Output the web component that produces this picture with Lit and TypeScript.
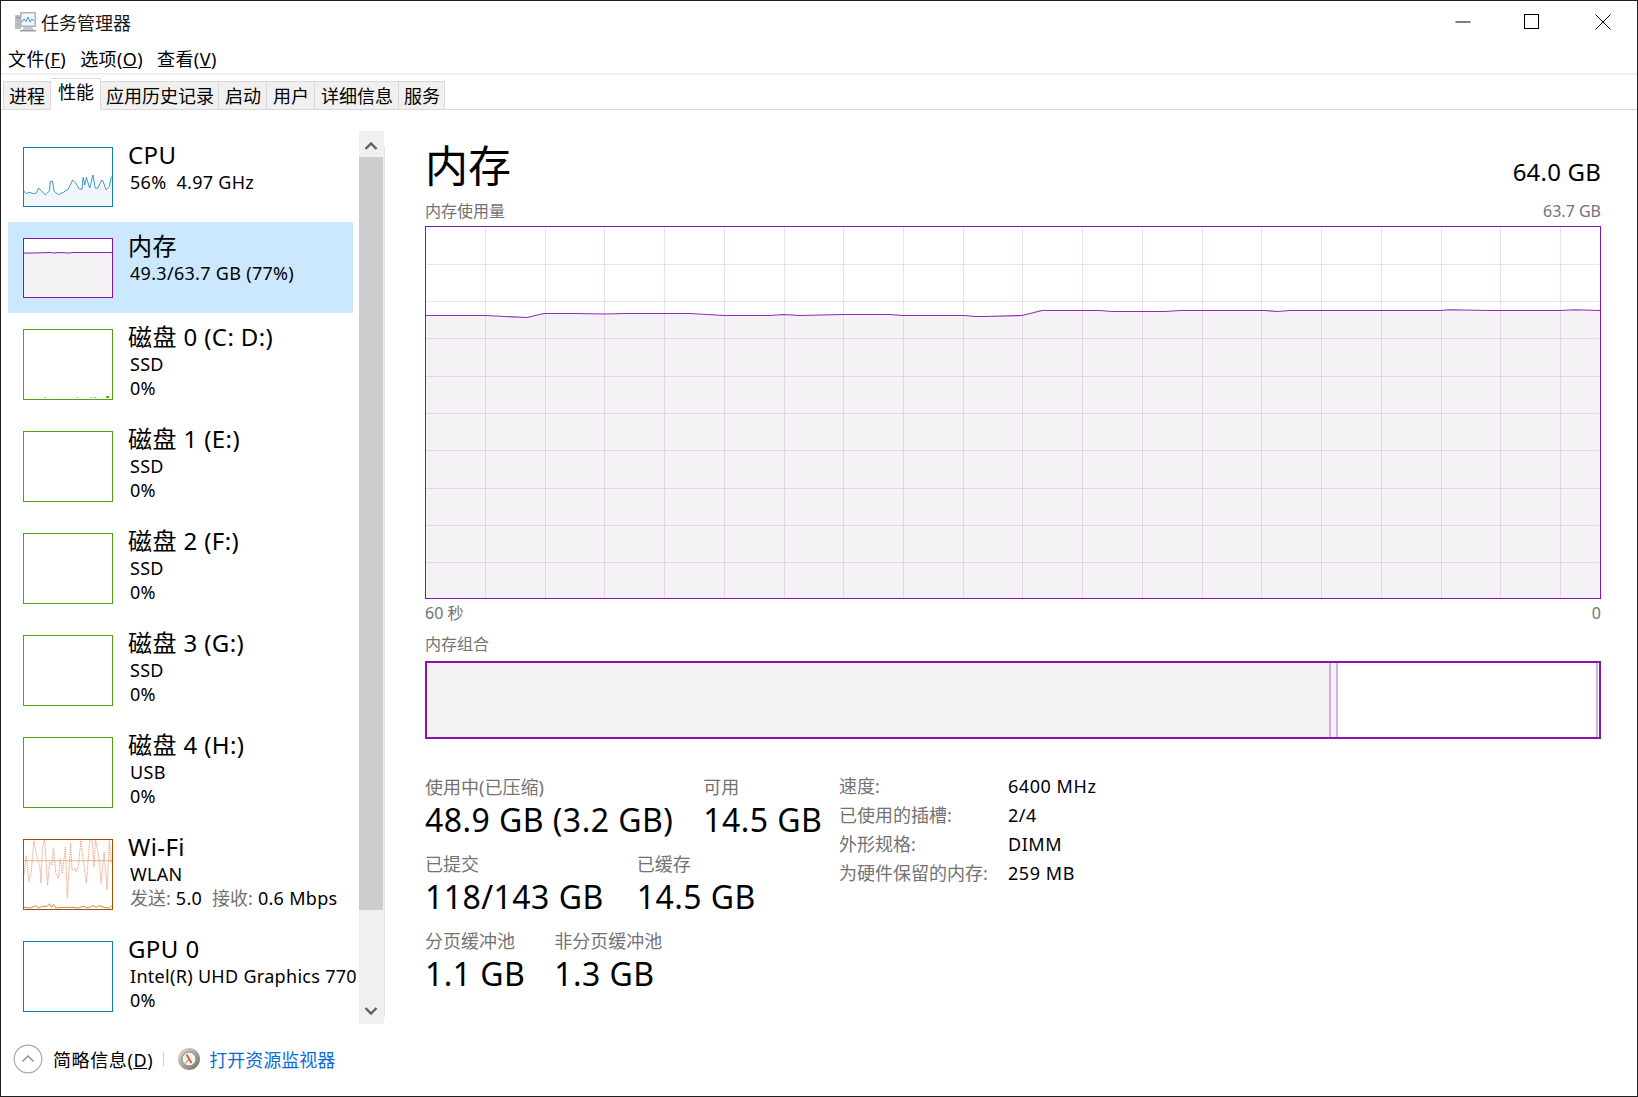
import { LitElement, html, css, svg } from "lit";
import { customElement } from "lit/decorators.js";

const CPU = "70,185 78,192 85,188 100,192 108,190 114,175 122,182 135,196 147,184 150,155 157,154 162,185 175,195 190,188 205,178 218,150 228,160 238,178 247,178 250,142 255,165 260,142 270,175 280,135 287,175 295,175 305,152 310,152 320,180 330,170 336,140";
const WIFI_A = "40,130 47,75 55,155 62,125 70,30 78,75 88,105 92,160 96,50 103,28 112,165 118,95 125,105 130,50 137,130 145,145 150,85 157,130 166,50 172,205 182,38 186,120 195,115 200,125 207,100 213,30 222,100 230,160 240,30 248,28 253,110 258,28 268,80 275,160 284,65 293,180 300,28 306,100";
const WIFI_B = "40,233 60,235 75,228 85,235 95,230 110,230 118,222 124,233 130,224 136,235 160,233 185,233 205,235 220,230 235,235 250,228 260,233 268,228 285,233 300,235 308,228";
const MEM_LINE = "426,315.5 485,315.5 527,317.5 544,313.5 575,313.5 604,314 625,313.5 690,313.5 724,315.5 770,315.5 783,314.5 800,315.5 843,314.5 890,314.5 903,315.5 965,315.5 975,316.5 985,316.5 1022,315.5 1042,310.5 1100,310.5 1112,311.5 1165,311.5 1180,310.5 1265,310.5 1277,311.5 1290,310.5 1440,310.5 1450,309.8 1490,310.5 1560,310.5 1575,309.8 1600,310.5";
const GRID_X = Array.from({ length: 19 }, (_, i) => Math.round(485 + i * 59.72) + 0.5);
const GRID_Y = Array.from({ length: 9 }, (_, i) => Math.round(226.5 + (i + 1) * 37.3) + 0.5);

type Kind = "cpu" | "mem" | "disk0" | "disk" | "wifi" | "gpu";
interface Item {
  title: string;
  lines: unknown[];
  kind: Kind;
  tall: boolean;
  selected?: boolean;
}

const ITEMS: Item[] = [
  { title: "CPU", lines: ["56%  4.97 GHz"], kind: "cpu", tall: false },
  { title: "内存", lines: ["49.3/63.7 GB (77%)"], kind: "mem", tall: false, selected: true },
  { title: "磁盘 0 (C: D:)", lines: ["SSD", "0%"], kind: "disk0", tall: true },
  { title: "磁盘 1 (E:)", lines: ["SSD", "0%"], kind: "disk", tall: true },
  { title: "磁盘 2 (F:)", lines: ["SSD", "0%"], kind: "disk", tall: true },
  { title: "磁盘 3 (G:)", lines: ["SSD", "0%"], kind: "disk", tall: true },
  { title: "磁盘 4 (H:)", lines: ["USB", "0%"], kind: "disk", tall: true },
  {
    title: "Wi-Fi",
    lines: ["WLAN", html`<span class="grey">发送:</span> 5.0&nbsp; <span class="grey">接收:</span> 0.6 Mbps`],
    kind: "wifi",
    tall: true,
  },
  { title: "GPU 0", lines: ["Intel(R) UHD Graphics 770", "0%"], kind: "gpu", tall: true },
];

const thumb = (kind: Kind) => {
  if (kind === "cpu") {
    return html`<svg viewBox="70 52 268 178" preserveAspectRatio="none">
      <polygon points="70,230 ${CPU} 338,230" fill="#f1f6fa"></polygon>
      <polyline points=${CPU} fill="none" stroke="#117dbb" stroke-width="2.4"></polyline>
    </svg>`;
  }
  if (kind === "mem") {
    return html`<svg viewBox="0 0 90 60" preserveAspectRatio="none">
      <polygon points="0,14.5 9,14.5 27,14 30,14.5 36,14 47,14.5 49,14 90,14 90,60 0,60" fill="#f4f2f4"></polygon>
      <polyline points="0,14.5 9,14.5 27,14 30,14.5 36,14 47,14.5 49,14 90,14" fill="none" stroke="#8b12ae" stroke-width="1"></polyline>
    </svg>`;
  }
  if (kind === "disk0") {
    return html`<svg viewBox="0 0 90 71" preserveAspectRatio="none">
      <path d="M21 69h1v1h-1zM54 69h1v1h-1zM68 69h1v1h-1zM71 69h1v1h-1zM73 69h1v1h-1zM84 68h3v2h-3z" fill="#4da60c"></path>
    </svg>`;
  }
  if (kind === "wifi") {
    return html`<svg viewBox="40 28 268 210" preserveAspectRatio="none">
      <polyline points=${WIFI_A} fill="none" stroke="#fbe7de" stroke-width="3"></polyline>
      <polyline points=${WIFI_A} fill="none" stroke="#ea8f69" stroke-width="2.6" stroke-dasharray="3 4"></polyline>
      <line x1="40" y1="91" x2="308" y2="91" stroke="#d7a272" stroke-width="2.4"></line>
      <polyline points=${WIFI_B} fill="none" stroke="#b7662a" stroke-width="2.4"></polyline>
    </svg>`;
  }
  return null;
};

const graph = () => svg`
  <polygon points="426,598 ${MEM_LINE} 1600,598" fill="#f4f2f4"></polygon>
  ${GRID_X.map((x) => svg`<line x1=${x} y1="227" x2=${x} y2="598" stroke="#781e8c" stroke-opacity=".13"></line>`)}
  ${GRID_Y.map((y) => svg`<line x1="426" y1=${y} x2="1599" y2=${y} stroke="#781e8c" stroke-opacity=".13"></line>`)}
  <polyline points=${MEM_LINE} fill="none" stroke="#8b12ae" stroke-opacity=".9" stroke-width="1.1"></polyline>
`;

@customElement("app-root")
export class AppRoot extends LitElement {
  static styles = css`
    :host {
      display: block;
      width: 1638px;
      height: 1097px;
      font-family: "Noto Sans", "Noto Sans CJK SC", sans-serif;
      color: #000;
    }
    * { box-sizing: border-box; }
    .win {
      width: 1638px;
      height: 1097px;
      border: 1px solid #1f1f1f;
      background: #fff;
      display: flex;
      flex-direction: column;
      overflow: hidden;
    }
    .title {
      height: 43px;
      flex: none;
      display: flex;
      align-items: center;
      padding: 0 0 2px 13px;
      font-size: 18px;
      color: #1a1a1a;
    }
    .title svg.app { width: 23px; height: 21px; margin-right: 4px; }
    .controls { margin-left: auto; display: flex; align-items: center; height: 100%; }
    .controls svg { display: block; width: 16px; height: 16px; }
    .controls .c1 { margin-right: 53px; }
    .controls .c2 { margin-right: 55px; }
    .controls .c3 { margin-right: 26px; }
    .menu {
      height: 29px;
      flex: none;
      display: flex;
      gap: 14px;
      padding-left: 7px;
      font-size: 18px;
      line-height: 30px;
      letter-spacing: 0.4px;
      white-space: nowrap;
    }
    .rule { height: 2px; flex: none; background: #f0f0f0; }
    .tabs {
      height: 35px;
      flex: none;
      display: flex;
      align-items: flex-end;
      padding-left: 2px;
      border-bottom: 1px solid #d9d9d9;
      font-size: 18px;
    }
    .tab {
      height: 29px;
      margin-bottom: -1px;
      padding: 0 5px;
      line-height: 28px;
      background: #f0f0f0;
      border-top: 1px solid #d9d9d9;
      border-right: 1px solid #d9d9d9;
      border-bottom: 1px solid #d9d9d9;
      white-space: nowrap;
    }
    .tab:first-child { border-left: 1px solid #d9d9d9; }
    .tab.narrow { padding: 0 4px 0 5px; }
    .tab.wide { padding: 0 5px 0 6px; }
    .tab.active {
      height: 32px;
      margin-bottom: -1px;
      background: #fff;
      border-bottom-color: #fff;
      padding: 0 6px 0 7px;
      line-height: 26px;
    }
    .body { flex: 1; min-height: 0; display: flex; padding-top: 21px; }
    .side { display: flex; flex: none; height: 893px; }
    .list { width: 358px; flex: none; padding-left: 7px; overflow: hidden; }
    .item {
      width: 345px;
      display: flex;
      height: 102px;
      padding: 16px 0 0 15px;
      white-space: nowrap;
    }
    .item.short { height: 91px; }
    .item.sel { background: #cce8ff; }
    .thumb {
      width: 90px;
      height: 71px;
      flex: none;
      border: 1px solid;
      background: #fff;
    }
    .item.short .thumb { height: 60px; }
    .thumb svg { display: block; width: 100%; height: 100%; }
    .t-cpu, .t-gpu { border-color: #117dbb; }
    .t-mem { border-color: #8b12ae; }
    .t-disk0, .t-disk { border-color: #4da60c; }
    .t-wifi { border-color: #a74f01; }
    .info { margin: -7px 0 0 15px; }
    .name { font-size: 24px; line-height: 30px; letter-spacing: 0.4px; }
    .sub { font-size: 18px; line-height: 24px; padding-left: 2px; letter-spacing: 0.3px; white-space: pre; }
    .grey { color: #737373; letter-spacing: 0; }
    .sb {
      width: 25px;
      flex: none;
      background: #f0f0f0;
      display: flex;
      flex-direction: column;
    }
    .sb .btn { height: 26px; flex: none; display: flex; align-items: center; justify-content: center; }
    .sb .btn.up { padding-top: 4px; }
    .sb .btn svg { width: 14px; height: 10px; display: block; margin-right: 2px; }
    .sb .bar { height: 753px; width: 24px; background: #cdcdcd; flex: none; }
    .sb .rest { flex: 1; }
    .edge { width: 1px; flex: none; background: #e3e3e3; margin: 15px 0 7px; }
    .main { flex: none; width: 1176px; margin-left: 40px; }
    .head { height: 70px; display: flex; justify-content: space-between; }
    .head h1 { margin: 0; font-size: 43px; font-weight: 400; line-height: 70px; }
    .head .total { margin-top: 25px; font-size: 24px; line-height: 32px; letter-spacing: 0.2px; }
    .cap {
      display: flex;
      justify-content: space-between;
      font-size: 16px;
      line-height: 21px;
      color: #737373;
    }
    .cap.top { margin-bottom: 4px; }
    .cap.time { height: 28px; line-height: 28px; }
    .cap.comp { margin: 6px 0 6px; line-height: 22px; }
    .graph { height: 373px; border: 1px solid #8b12ae; background: #fff; }
    .graph svg { display: block; width: 100%; height: 100%; }
    .combo {
      height: 78px;
      border: 2px solid #8b12ae;
      display: flex;
      background: #fff;
    }
    .combo .use { width: 902px; background: #f4f2f4; }
    .combo .mark { width: 2px; background: #d0b0dc; }
    .combo .mod { width: 5px; background: #f4f2f4; }
    .combo .free { flex: 1; }
    .combo .end { width: 1px; }
    .stats { display: flex; margin-top: 36px; }
    .left { width: 414px; flex: none; }
    .row { display: flex; height: 77px; white-space: nowrap; }
    .r1 { gap: 30px; }
    .r2 { gap: 33px; }
    .r3 { gap: 29px; }
    .lbl { font-size: 18px; line-height: 24px; color: #737373; }
    .val { font-size: 32px; line-height: 41px; letter-spacing: 0.45px; }
    .spec {
      display: grid;
      grid-template-columns: 169px auto;
      grid-auto-rows: 29px;
      align-content: start;
      margin-top: -3px;
      font-size: 18px;
      line-height: 29px;
      white-space: nowrap;
    }
    .spec .v { letter-spacing: 0.55px; }
    .foot {
      height: 72px;
      flex: none;
      display: flex;
      align-items: center;
      padding: 0 0 2px 12px;
      font-size: 18px;
      white-space: nowrap;
    }
    .foot svg { display: block; flex: none; }
    .foot .less { margin-left: 10px; letter-spacing: 0.6px; }
    .foot .sep { width: 1px; height: 14px; background: #d0d0d0; margin: 0 13px 0 10px; }
    .foot .link { color: #0a6cd6; margin-left: 8px; }
  `;

  render() {
    return html`<div class="win">
      <div class="title">
        <svg class="app" viewBox="0 0 23 21">
          <rect x="1" y="4" width="6" height="14" rx="1" fill="#b9bdbf"></rect>
          <rect x="2" y="6" width="4" height="1" fill="#8c9296"></rect>
          <rect x="6" y="1" width="16" height="15" rx="1" fill="#aab2b6"></rect>
          <rect x="7.5" y="2.5" width="13" height="12" fill="#f2f8fb"></rect>
          <polyline points="8,11 10,8 12,10.5 14,6 16,11 18,8 20,10" fill="none" stroke="#3f97cf" stroke-width="1"></polyline>
          <path d="M10 16h8l2 3H8z" fill="#c5c9cb"></path>
          <rect x="6" y="19" width="16" height="1.5" fill="#9aa0a3"></rect>
        </svg>
        任务管理器
        <div class="controls">
          <svg class="c1" viewBox="0 0 16 16"><path d="M0.5 8H15.5" stroke="#000" stroke-width="1"></path></svg>
          <svg class="c2" viewBox="0 0 16 16"><rect x="0.5" y="0.5" width="14" height="14" fill="none" stroke="#000"></rect></svg>
          <svg class="c3" viewBox="0 0 16 16"><path d="M0.5 0.5L15.5 15.5M15.5 0.5L0.5 15.5" stroke="#000" stroke-width="1"></path></svg>
        </div>
      </div>
      <div class="menu">
        <span>文件(<u>F</u>)</span><span>选项(<u>O</u>)</span><span>查看(<u>V</u>)</span>
      </div>
      <div class="rule"></div>
      <div class="tabs">
        <div class="tab">进程</div>
        <div class="tab active">性能</div>
        <div class="tab narrow">应用历史记录</div>
        <div class="tab wide">启动</div>
        <div class="tab wide">用户</div>
        <div class="tab wide">详细信息</div>
        <div class="tab narrow">服务</div>
      </div>
      <div class="body">
        <div class="side">
          <div class="list">
            ${ITEMS.map(
              (it) => html`<div class="item ${it.tall ? "" : "short"} ${it.selected ? "sel" : ""}">
                <div class="thumb t-${it.kind}">${thumb(it.kind)}</div>
                <div class="info">
                  <div class="name">${it.title}</div>
                  ${it.lines.map((l) => html`<div class="sub">${l}</div>`)}
                </div>
              </div>`
            )}
          </div>
          <div class="sb">
            <div class="btn up">
              <svg viewBox="0 0 14 10"><path d="M1.5 8L7 2.5L12.5 8" fill="none" stroke="#606060" stroke-width="2.4"></path></svg>
            </div>
            <div class="bar"></div>
            <div class="rest"></div>
            <div class="btn">
              <svg viewBox="0 0 14 10"><path d="M1.5 2L7 7.5L12.5 2" fill="none" stroke="#606060" stroke-width="2.4"></path></svg>
            </div>
          </div>
          <div class="edge"></div>
        </div>
        <div class="main">
          <div class="head"><h1>内存</h1><div class="total">64.0 GB</div></div>
          <div class="cap top"><span>内存使用量</span><span>63.7 GB</span></div>
          <div class="graph"><svg viewBox="426 227 1174 371" preserveAspectRatio="none">${graph()}</svg></div>
          <div class="cap time"><span>60 秒</span><span>0</span></div>
          <div class="cap comp"><span>内存组合</span></div>
          <div class="combo">
            <div class="use"></div><div class="mark"></div><div class="mod"></div><div class="mark"></div>
            <div class="free"></div><div class="mark"></div><div class="end"></div>
          </div>
          <div class="stats">
            <div class="left">
              <div class="row r1">
                <div><div class="lbl">使用中(已压缩)</div><div class="val">48.9 GB (3.2 GB)</div></div>
                <div><div class="lbl">可用</div><div class="val">14.5 GB</div></div>
              </div>
              <div class="row r2">
                <div><div class="lbl">已提交</div><div class="val">118/143 GB</div></div>
                <div><div class="lbl">已缓存</div><div class="val">14.5 GB</div></div>
              </div>
              <div class="row r3">
                <div><div class="lbl">分页缓冲池</div><div class="val">1.1 GB</div></div>
                <div><div class="lbl">非分页缓冲池</div><div class="val">1.3 GB</div></div>
              </div>
            </div>
            <div class="spec">
              <span class="grey">速度:</span><span class="v">6400 MHz</span>
              <span class="grey">已使用的插槽:</span><span class="v">2/4</span>
              <span class="grey">外形规格:</span><span class="v">DIMM</span>
              <span class="grey">为硬件保留的内存:</span><span class="v">259 MB</span>
            </div>
          </div>
        </div>
      </div>
      <div class="foot">
        <svg width="30" height="30" viewBox="0 0 30 30">
          <circle cx="15" cy="15" r="13.8" fill="#fff" stroke="#ababab" stroke-width="1.2"></circle>
          <path d="M9.5 17.5L15 12L20.5 17.5" fill="none" stroke="#8a8a8a" stroke-width="1.4"></path>
        </svg>
        <span class="less">简略信息(<u>D</u>)</span>
        <span class="sep"></span>
        <svg width="24" height="24" viewBox="0 0 24 24">
          <defs>
            <linearGradient id="ring" x1="0" y1="0" x2="1" y2="1">
              <stop offset="0" stop-color="#e2e2de"></stop>
              <stop offset="1" stop-color="#6f6b66"></stop>
            </linearGradient>
          </defs>
          <circle cx="12" cy="12" r="11" fill="url(#ring)"></circle>
          <circle cx="12" cy="12" r="7" fill="#f6f3ef" stroke="#7a756f" stroke-width="0.8"></circle>
          <path d="M9.5 7.5L14.5 16" stroke="#e0552f" stroke-width="1.8"></path>
          <path d="M8 16.5L12 12" stroke="#7d7a76" stroke-width="1"></path>
        </svg>
        <span class="link">打开资源监视器</span>
      </div>
    </div>`;
  }
}
